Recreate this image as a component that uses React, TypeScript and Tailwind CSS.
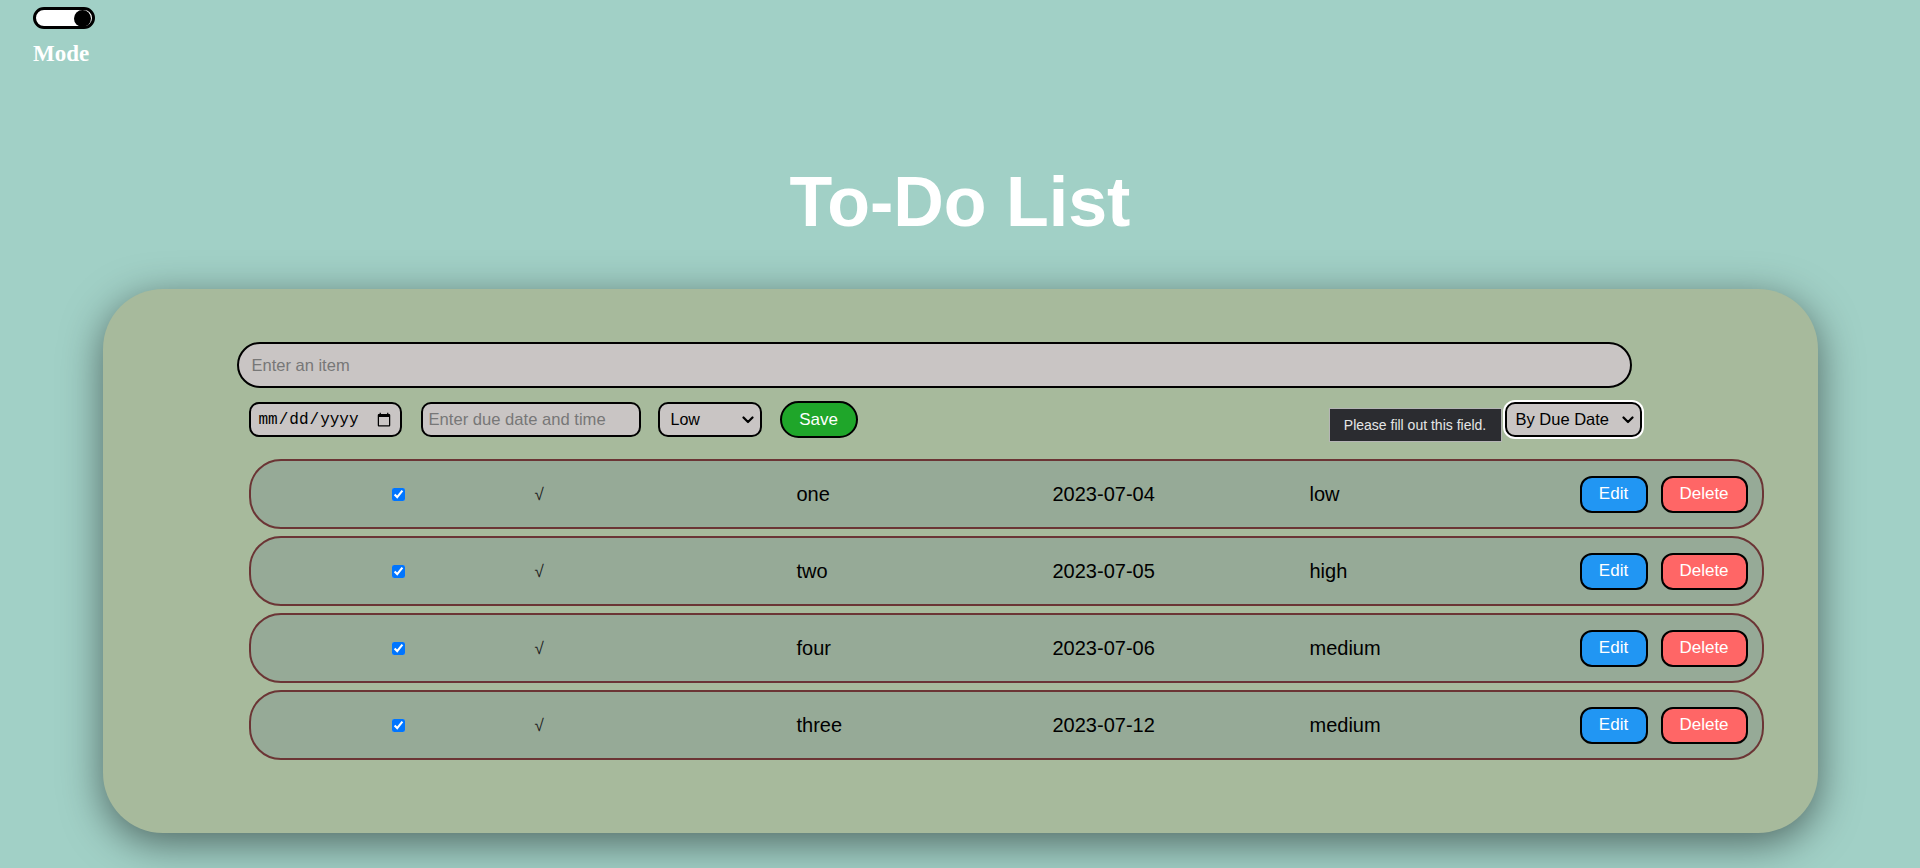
import React from 'react';

const todos = [
  { id: 1, text: 'one', due: '2023-07-04', priority: 'low' },
  { id: 2, text: 'two', due: '2023-07-05', priority: 'high' },
  { id: 3, text: 'four', due: '2023-07-06', priority: 'medium' },
  { id: 4, text: 'three', due: '2023-07-12', priority: 'medium' },
];

function Chevron() {
  return (
    <svg width="12" height="8" viewBox="0 0 12 8" className="pointer-events-none absolute top-1/2 -translate-y-1/2 right-[8px]">
      <path d="M1.5 1.5 L6 6 L10.5 1.5" fill="none" stroke="#000" strokeWidth="2.2" strokeLinecap="round" strokeLinejoin="round" />
    </svg>
  );
}

export default function App() {
  return (
    <div className="min-h-screen bg-[#a1d0c6] font-['Liberation_Sans',Arial,sans-serif] overflow-hidden">
      {/* Mode toggle */}
      <div className="pl-[33px] pt-[7px]">
        <div className="flex h-[22px] w-[62px] items-center justify-end rounded-full border-[3px] border-black bg-white pr-[1px]">
          <div className="h-[17px] w-[17px] rounded-full bg-black" />
        </div>
        <div className="mt-[12px] text-[23px] font-bold leading-[26px] text-white font-['Liberation_Serif','Times_New_Roman',serif]">
          Mode
        </div>
      </div>

      <h1 className="mt-[100px] text-center text-[70px] font-bold leading-none text-white">To-Do List</h1>

      {/* Card */}
      <div className="mx-auto mt-[52px] w-[1715px] rounded-[60px] bg-[#a7ba9c] pl-[134px] pt-[53px] pb-[73px] shadow-[0_10px_40px_rgba(0,0,0,0.5)]">
        <input
          type="text"
          placeholder="Enter an item"
          className="block h-[46px] w-[1395px] rounded-full border-2 border-black bg-[#c9c5c4] px-[13px] text-[16.5px] text-black placeholder:text-[#777] outline-none"
        />

        <div className="ml-[12px] mt-[13px] flex h-[37px] w-[1395px] items-center">
          <input
            type="date"
            className="h-[35px] w-[153px] rounded-[10px] border-2 border-black bg-[#c9c5c4] pl-[7px] pr-[6px] text-[16px] text-black font-['Liberation_Mono',monospace] outline-none"
          />
          <input
            type="text"
            placeholder="Enter due date and time"
            className="ml-[19px] h-[35px] w-[220px] rounded-[10px] border-2 border-black bg-[#c9c5c4] px-[6px] text-[16.6px] placeholder:text-[#777] outline-none"
          />
          <div className="relative ml-[17px] h-[35px] w-[104px]">
            <select className="h-full w-full appearance-none rounded-[10px] border-2 border-black bg-[#c9c5c4] pl-[11px] text-[16px] text-black outline-none">
              <option>Low</option>
              <option>Medium</option>
              <option>High</option>
            </select>
            <Chevron />
          </div>
          <button className="ml-[18px] h-[37px] w-[78px] rounded-full border-2 border-black bg-[#1fa62a] text-[17px] text-white">
            Save
          </button>

          <div className="relative ml-auto mr-[2px] h-[35px] w-[137px]">
            <div className="absolute right-[calc(100%+3px)] top-[6px] flex h-[34px] w-[173px] items-center justify-center border border-[#b5b5b5] bg-[#2b2c30] text-[14px] text-[#e6e6e6]">
              Please fill out this field.
            </div>
            <select className="h-full w-full appearance-none rounded-[10px] border-2 border-black bg-[#c9c5c4] pl-[9px] text-[16.5px] text-black ring-2 ring-white outline-none">
              <option>By Due Date</option>
              <option>By Priority</option>
            </select>
            <Chevron />
          </div>
        </div>

        {/* Rows */}
        <div className="ml-[12px] mt-[21px] flex w-[1515px] flex-col gap-[7px]">
          {todos.map((t) => (
            <div
              key={t.id}
              className="flex h-[70px] items-center rounded-[32px] border-2 border-[#6b3535] bg-[#96aa97] pl-[141px] pr-[14px] text-[20px] text-black"
            >
              <input type="checkbox" checked readOnly className="m-0 h-[13px] w-[13px] accent-[#0075ff]" />
              <span className="ml-[130px] w-[262px] text-[17px] leading-none text-[#222]">√</span>
              <span className="w-[256px]">{t.text}</span>
              <span className="w-[257px]">{t.due}</span>
              <span>{t.priority}</span>
              <div className="ml-auto flex gap-[13px]">
                <button className="h-[37px] w-[68px] rounded-[12px] border-2 border-black bg-[#2196f3] text-[17px] text-white">
                  Edit
                </button>
                <button className="h-[37px] w-[87px] rounded-[12px] border-2 border-black bg-[#ff6666] text-[17px] text-white">
                  Delete
                </button>
              </div>
            </div>
          ))}
        </div>
      </div>
    </div>
  );
}
